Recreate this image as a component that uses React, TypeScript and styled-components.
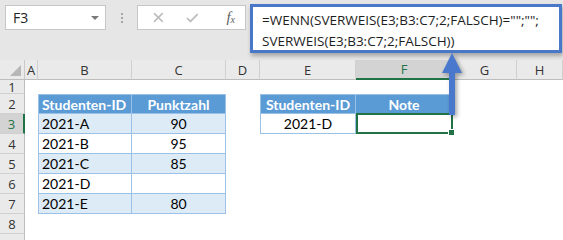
import styled, { createGlobalStyle, css } from "styled-components";

const GlobalStyle = createGlobalStyle`
  body {
    margin: 0;
    overflow: hidden;
    background: #ffffff;
  }
`;

const Page = styled.div`
  position: relative;
  width: 563px;
  height: 240px;
  overflow: hidden;
  background: #ffffff;
  font-family: "Open Sans", "Noto Sans", sans-serif;
`;

// formula bar area
const TopBar = styled.div`
  display: flex;
  align-items: flex-start;
  height: 60px;
  padding: 5px 0 0 5px;
  box-sizing: border-box;
  background: #e6e6e6;
`;

const NameBox = styled.div`
  display: flex;
  align-items: center;
  justify-content: space-between;
  width: 101px;
  height: 25px;
  box-sizing: border-box;
  padding: 0 6px 0 7px;
  background: #ffffff;
  border: 1px solid #c6c6c6;
  font-size: 14px;
  color: #222222;
`;

const DropTri = styled.span`
  width: 0;
  height: 0;
  border-left: 4px solid transparent;
  border-right: 4px solid transparent;
  border-top: 4px solid #7a7a7a;
`;

const Grip = styled.div`
  display: flex;
  flex-direction: column;
  align-items: center;
  gap: 2px;
  width: 31px;
  padding-top: 8px;
  span {
    width: 2px;
    height: 2px;
    background: #a6a6a6;
  }
`;

const FxBox = styled.div`
  display: flex;
  align-items: center;
  width: 109px;
  height: 25px;
  box-sizing: border-box;
  padding: 0 10px 0 15px;
  gap: 22px;
  background: #ffffff;
  border: 1px solid #c6c6c6;
`;

const Fx = styled.span`
  margin-left: 6px;
  font-family: "Liberation Serif", serif;
  font-style: italic;
  font-size: 15px;
  color: #5e5e5e;
  sub {
    font-size: 10px;
    vertical-align: -1px;
  }
`;

const FormulaBox = styled.div`
  width: 312px;
  height: 49px;
  margin: -1px 0 0 4px;
  box-sizing: border-box;
  padding: 3px 0 0 9px;
  background: #ffffff;
  border: 3px solid #4a78c9;
  box-shadow: 1px 3px 4px rgba(0, 0, 0, 0.28);
  font-size: 13.5px;
  line-height: 21px;
  color: #1e1e1e;
  white-space: pre;
  position: relative;
  z-index: 1;
`;

// worksheet
const Sheet = styled.div`
  display: grid;
  grid-template-columns: 25px 13px 94px 94px 34px 96px 97px 64px 1fr;
  grid-template-rows: 20px 14px repeat(8, 20px);
  font-family: "Lato", "Open Sans", sans-serif;
  font-size: 14px;
  color: #000000;
`;

const headBase = css`
  display: flex;
  align-items: center;
  justify-content: center;
  box-sizing: border-box;
  background: #eaeaea;
  font-family: "Open Sans", "Noto Sans", sans-serif;
  font-size: 13px;
  color: #333333;
`;

const Corner = styled.div`
  ${headBase};
  border-right: 1px solid #c9c9c9;
  border-bottom: 1px solid #bdbdbd;
  position: relative;
  &::after {
    content: "";
    position: absolute;
    right: 3px;
    bottom: 3px;
    width: 0;
    height: 0;
    border-left: 11px solid transparent;
    border-bottom: 11px solid #b7b7b7;
  }
`;

const ColHead = styled.div<{ $active?: boolean }>`
  ${headBase};
  border-right: 1px solid #d0d0d0;
  border-bottom: 1px solid #bdbdbd;
  ${(p) =>
    p.$active &&
    css`
      background: #d3d3d3;
      color: #217346;
      border-bottom: 2px solid #217346;
    `}
`;

const RowHead = styled.div<{ $active?: boolean }>`
  ${headBase};
  border-right: 1px solid #bdbdbd;
  border-bottom: 1px solid #d0d0d0;
  ${(p) =>
    p.$active &&
    css`
      background: #d3d3d3;
      color: #217346;
      border-right: 2px solid #217346;
    `}
`;

type Kind = "empty" | "head" | "band" | "plain" | "select";

const Cell = styled.div<{
  $kind: Kind;
  $center?: boolean;
  $left?: boolean;
  $top?: boolean;
}>`
  position: relative;
  display: flex;
  align-items: center;
  justify-content: ${(p) => (p.$center ? "center" : "flex-start")};
  padding-left: ${(p) => (p.$center ? 0 : 3)}px;
  box-sizing: border-box;
  white-space: nowrap;
  ${(p) =>
    (p.$kind === "head" || p.$kind === "band" || p.$kind === "plain") &&
    css`
      border-right: 1px solid #9bc2e6;
      border-bottom: 1px solid #9bc2e6;
      border-left: ${p.$left ? "1px solid #9bc2e6" : "none"};
      border-top: ${p.$top ? "1px solid #9bc2e6" : "none"};
    `}
  ${(p) =>
    p.$kind === "head" &&
    css`
      background: #5b9bd5;
      color: #ffffff;
      font-weight: 700;
    `}
  ${(p) =>
    p.$kind === "band" &&
    css`
      background: #ddebf7;
    `}
  ${(p) =>
    p.$kind === "select" &&
    css`
      margin: -1px 0 0 0;
      border: 2px solid #217346;
    `}
`;

const Handle = styled.span`
  position: absolute;
  right: -4px;
  bottom: -4px;
  width: 5px;
  height: 5px;
  background: #217346;
  border: 1px solid #ffffff;
`;

const Arrow = styled.svg`
  position: absolute;
  left: 438px;
  top: 50px;
  overflow: visible;
  filter: drop-shadow(2px 2px 2px rgba(0, 0, 0, 0.35));
  z-index: 2;
`;

type CellSpec = { text?: string; kind: Kind; center?: boolean; left?: boolean; top?: boolean };

const cols = ["A", "B", "C", "D", "E", "F", "G", "H"];
const E: CellSpec = { kind: "empty" };

const rows: { n: string; cells: CellSpec[] }[] = [
  { n: "1", cells: [E, E, E, E, E, E, E, E] },
  {
    n: "2",
    cells: [
      E,
      { text: "Studenten-ID", kind: "head", left: true, top: true },
      { text: "Punktzahl", kind: "head", center: true, top: true },
      E,
      { text: "Studenten-ID", kind: "head", center: true, left: true, top: true },
      { text: "Note", kind: "head", center: true, top: true },
      E,
      E,
    ],
  },
  {
    n: "3",
    cells: [
      E,
      { text: "2021-A", kind: "band", left: true },
      { text: "90", kind: "band", center: true },
      E,
      { text: "2021-D", kind: "plain", center: true, left: true },
      { kind: "select" },
      E,
      E,
    ],
  },
  {
    n: "4",
    cells: [E, { text: "2021-B", kind: "plain", left: true }, { text: "95", kind: "plain", center: true }, E, E, E, E, E],
  },
  {
    n: "5",
    cells: [E, { text: "2021-C", kind: "band", left: true }, { text: "85", kind: "band", center: true }, E, E, E, E, E],
  },
  {
    n: "6",
    cells: [E, { text: "2021-D", kind: "plain", left: true }, { kind: "plain", center: true }, E, E, E, E, E],
  },
  {
    n: "7",
    cells: [E, { text: "2021-E", kind: "band", left: true }, { text: "80", kind: "band", center: true }, E, E, E, E, E],
  },
  { n: "8", cells: [E, E, E, E, E, E, E, E] },
  // row 9 is cut off by the window, only its top edge shows
  { n: "", cells: [E, E, E, E, E, E, E, E] },
];

export default function App() {
  return (
    <Page>
      <GlobalStyle />
      <TopBar>
        <NameBox>
          F3
          <DropTri />
        </NameBox>
        <Grip>
          <span />
          <span />
          <span />
        </Grip>
        <FxBox>
          <svg width="11" height="11" viewBox="0 0 11 11">
            <path d="M1 1 L10 10 M10 1 L1 10" stroke="#bdbdbd" strokeWidth="1.6" fill="none" />
          </svg>
          <svg width="13" height="10" viewBox="0 0 13 10">
            <path d="M1 5 L4.5 8.5 L12 1" stroke="#bdbdbd" strokeWidth="1.8" fill="none" />
          </svg>
          <Fx>
            f<sub>x</sub>
          </Fx>
        </FxBox>
        <FormulaBox>
          {'=WENN(SVERWEIS(E3;B3:C7;2;FALSCH)="";"";\nSVERWEIS(E3;B3:C7;2;FALSCH))'}
        </FormulaBox>
      </TopBar>
      <Sheet>
        <Corner />
        {cols.map((c) => (
          <ColHead key={c} $active={c === "F"}>
            {c}
          </ColHead>
        ))}
        {rows.map((r, ri) => (
          <>
            <RowHead key={"h" + ri} $active={r.n === "3"}>
              {r.n}
            </RowHead>
            {r.cells.map((c, i) => (
              <Cell
                key={ri + "-" + i}
                $kind={c.kind}
                $center={c.center}
                $left={c.left}
                $top={c.top}
              >
                {c.text}
                {c.kind === "select" && <Handle />}
              </Cell>
            ))}
          </>
        ))}
      </Sheet>
      <Arrow width="28" height="70" viewBox="0 0 28 70">
        <path d="M4 23 L14 3 L24 23 L17 23 L17 65 L11 65 L11 23 Z" fill="#4a78cc" />
      </Arrow>
    </Page>
  );
}
